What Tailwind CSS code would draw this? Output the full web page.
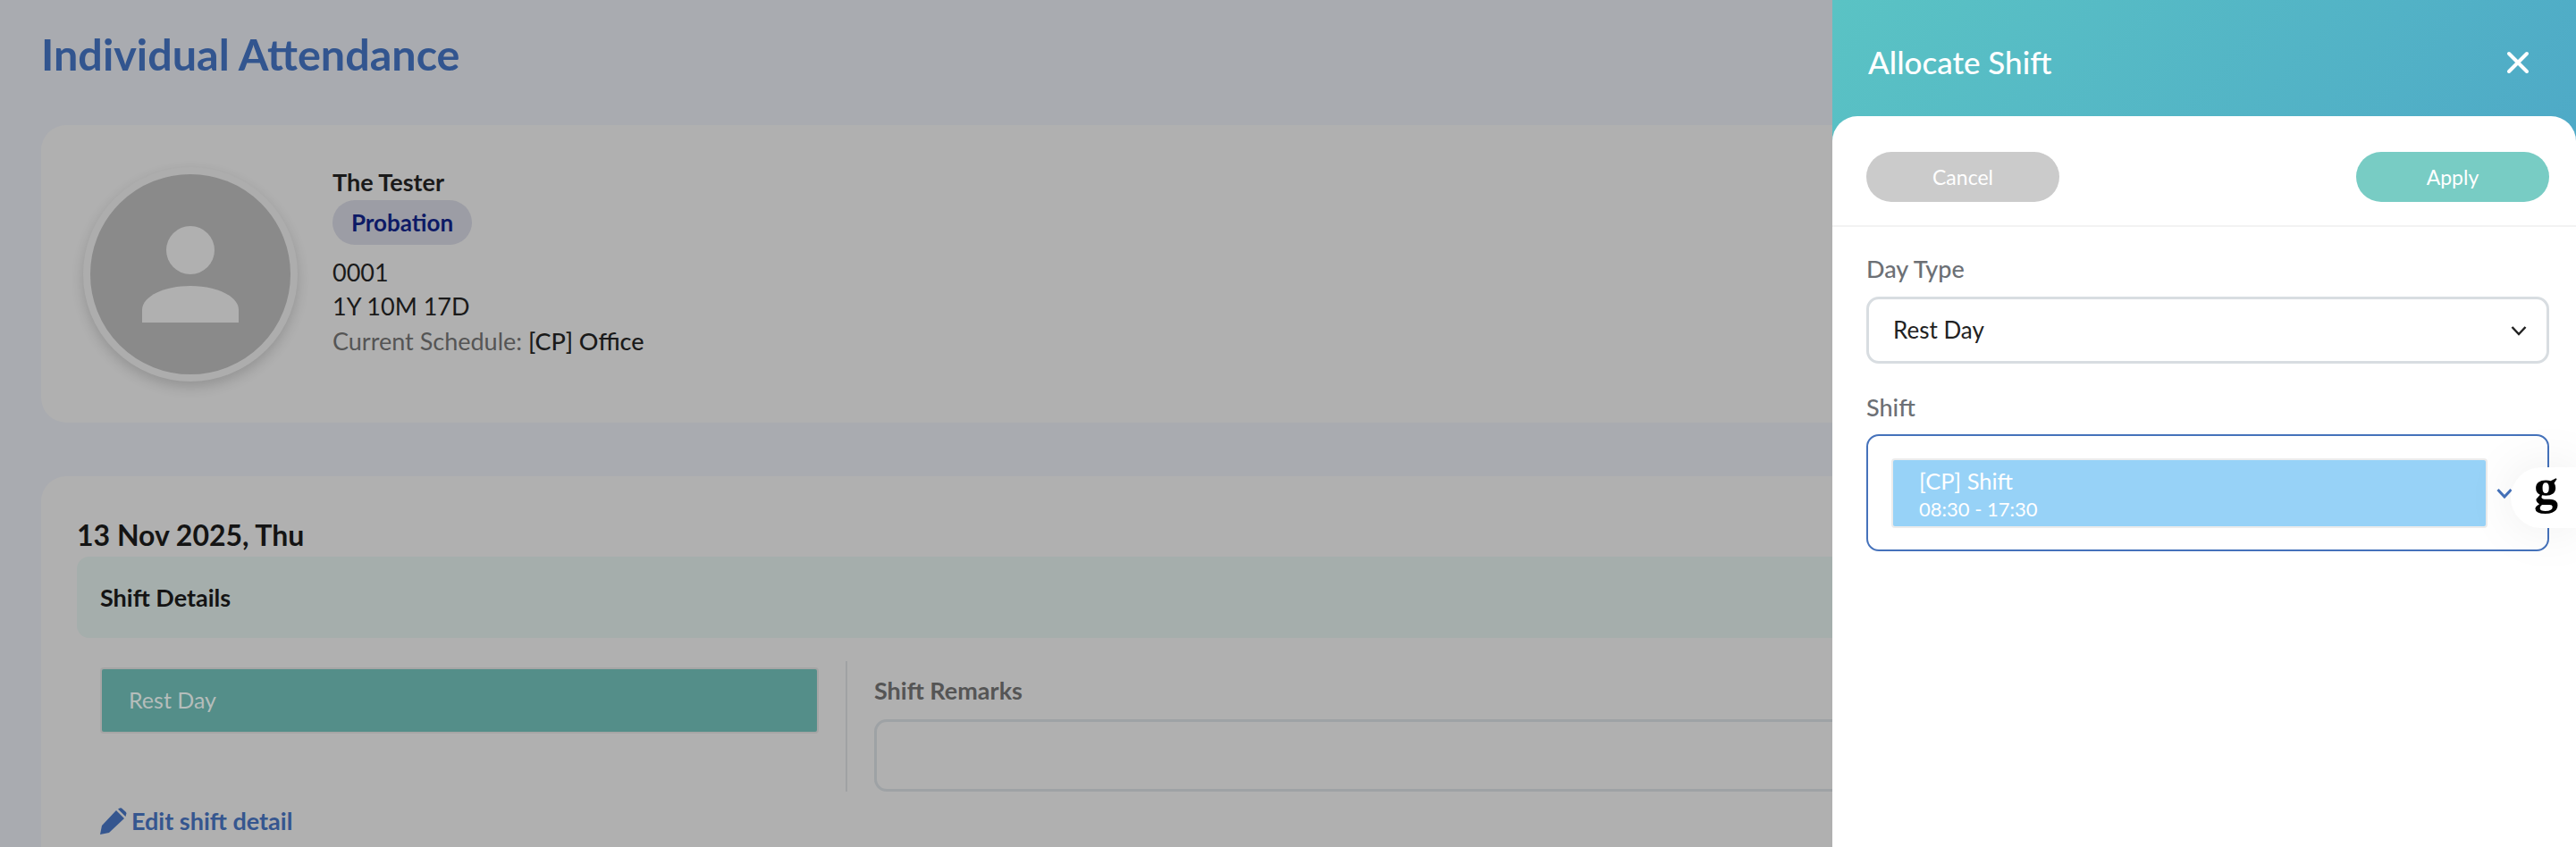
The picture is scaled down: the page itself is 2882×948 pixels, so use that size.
<!DOCTYPE html>
<html lang="en">
<head>
  <meta charset="UTF-8" />
  <title>Individual Attendance</title>
  <script src="https://cdn.jsdelivr.net/npm/@tailwindcss/browser@4"></script>
</head>
<body class="bg-[#a9abb0] font-['Lato',sans-serif]">
  <div class="flex h-[948px] w-[2882px] overflow-hidden">

    <!-- Page behind the drawer -->
    <main class="w-[2050px] shrink-0 pl-[46px] overflow-hidden">
      <h1 class="h-[140px] pt-[30px] text-[48.500px] leading-[60px] font-bold text-[#32558f]">Individual Attendance</h1>

      <!-- Employee card -->
      <section class="flex h-[333px] w-[2100px] rounded-l-[28px] bg-[#b0b0b0] pl-[47px] pt-[47px]">
        <div class="flex size-[240px] items-center justify-center rounded-full border-[8px] border-[#adadad] bg-[#8a8a8a] shadow-[0_6px_14px_rgba(0,0,0,0.16)]">
          <svg width="108" height="108" viewBox="0 0 108 108" class="fill-[#b0b0b0]">
            <circle cx="54" cy="27" r="27" />
            <path d="M0 108V94C0 78 26 67 54 67S108 78 108 94V108Z" />
          </svg>
        </div>
        <div class="ml-[39px] text-[27px] text-[#1a1a1a]">
          <div class="h-[37px] pb-[3px] leading-[34px] font-bold">The Tester</div>
          <div class="mb-[12px] flex h-[50px] w-[156px] items-center justify-center rounded-full bg-[#9c9da5] text-[26px] font-bold text-[#0d1a66]">Probation</div>
          <div class="h-[38px] leading-[38px]">0001</div>
          <div class="h-[39px] leading-[38px]">1Y 10M 17D</div>
          <div class="h-[38px] leading-[38px] text-[#555]">Current Schedule: <span class="font-medium text-[#1a1a1a]">[CP] Office</span></div>
        </div>
      </section>

      <!-- Day card -->
      <section class="mt-[60px] h-[500px] w-[2100px] rounded-l-[28px] bg-[#b0b0b0] pl-[40px] pt-[45px]">
        <div class="h-[45px] text-[32px] leading-[42px] font-bold text-[#141414]">13 Nov 2025, Thu</div>
        <div class="flex h-[91px] items-center rounded-l-[14px] bg-[#a5aeac] pl-[26px] pt-[2px] text-[27px] font-bold text-[#141414]">Shift Details</div>
        <div class="flex pl-[26px]">
          <div class="w-[834px] pt-[33px]">
            <div class="flex h-[74px] w-[804px] items-center rounded-[4px] border-2 border-[#a5a5a5] bg-[#548e89] pl-[30px] text-[25px] text-[#b5bdbb]">Rest Day</div>
          </div>
          <div class="mt-[26px] h-[146px] w-[2px] bg-[#a0a2a4]"></div>
          <div class="flex-1 pl-[30px] pt-[26px]">
            <div class="h-[65px] pt-[16px] text-[27px] leading-[34px] font-bold text-[#555]">Shift Remarks</div>
            <div class="h-[81px] rounded-[14px] border-[3px] border-[#9ea2a5]"></div>
          </div>
        </div>
        <div class="mt-[15px] flex h-[36px] items-center pl-[26px] text-[27px] font-bold text-[#35568f]">
          <svg width="30" height="30" viewBox="0 0 30 30" class="mr-[5px] fill-[#35568f]">
            <path d="M0 30L2 20L18 3L27 12L10 28ZM20 1.500L22 0.500Q23 0 24 0.500L29 5Q30 6.500 29 8L28.500 10Z" />
          </svg>
          Edit shift detail
        </div>
      </section>
    </main>

    <!-- Allocate Shift drawer -->
    <aside class="relative h-[948px] w-[832px] shrink-0 bg-gradient-to-br from-[#5ac3c4] to-[#4797c8]">
      <div class="flex h-[130px] items-center justify-between pl-[40px] pr-[52px] pt-[9px]">
        <h2 class="text-[35px] font-medium text-white">Allocate Shift</h2>
        <svg width="26" height="26" viewBox="0 0 26 26" class="stroke-white" fill="none" stroke-width="4" stroke-linecap="round">
          <path d="M3 3L23 23M23 3L3 23" />
        </svg>
      </div>
      <div class="h-[818px] rounded-t-[28px] bg-white">
        <div class="flex h-[124px] justify-between border-b-2 border-[#f3f3f3] pl-[38px] pr-[30px] pt-[40px]">
          <button class="h-[56px] w-[216px] rounded-full bg-[#cbcbcb] text-[23px] text-white">Cancel</button>
          <button class="h-[56px] w-[216px] rounded-full bg-[#78ccc4] text-[23px] text-white">Apply</button>
        </div>
        <div class="pl-[38px] pr-[30px]">
          <div class="h-[78px] pt-[29px] text-[27px] leading-[36px] font-medium text-[#6c7075]">Day Type</div>
          <div class="flex h-[75px] items-center justify-between rounded-[14px] border-[3px] border-[#d8dde1] pl-[27px] pr-[22px] text-[26px] text-[#222]">
            Rest Day
            <svg width="18" height="12" viewBox="0 0 18 12" fill="none" class="stroke-[#222]" stroke-width="2.500"><path d="M1.500 2L9 10L16.500 2" /></svg>
          </div>
          <div class="h-[79px] pt-[31px] text-[27px] leading-[36px] font-medium text-[#6c7075]">Shift</div>
          <div class="flex h-[131px] items-center rounded-[14px] border-2 border-[#4572bb] pl-[26px]">
            <div class="h-[78px] w-[667px] rounded-[4px] border-2 border-[#ececec] bg-[#97d2f7] pl-[29px] text-white">
              <div class="h-[40px] pt-[6px] text-[25.500px] leading-[34px]">[CP] Shift</div>
              <div class="text-[22px] leading-[30px]">08:30 - 17:30</div>
            </div>
            <svg width="18" height="12" viewBox="0 0 18 12" fill="none" class="ml-[10px] stroke-[#4572bb]" stroke-width="3"><path d="M1.500 2L9 10L16.500 2" /></svg>
          </div>
        </div>
      </div>

      <!-- Floating extension button -->
      <div class="absolute right-0 top-[523px] flex h-[68px] w-[73px] rounded-l-[34px] bg-white pl-[26px] shadow-[0_0_60px_rgba(0,0,0,0.08)] font-['Liberation_Serif',serif] text-[54px] leading-[44px] font-bold text-black">g</div>
    </aside>
  </div>
</body>
</html>
